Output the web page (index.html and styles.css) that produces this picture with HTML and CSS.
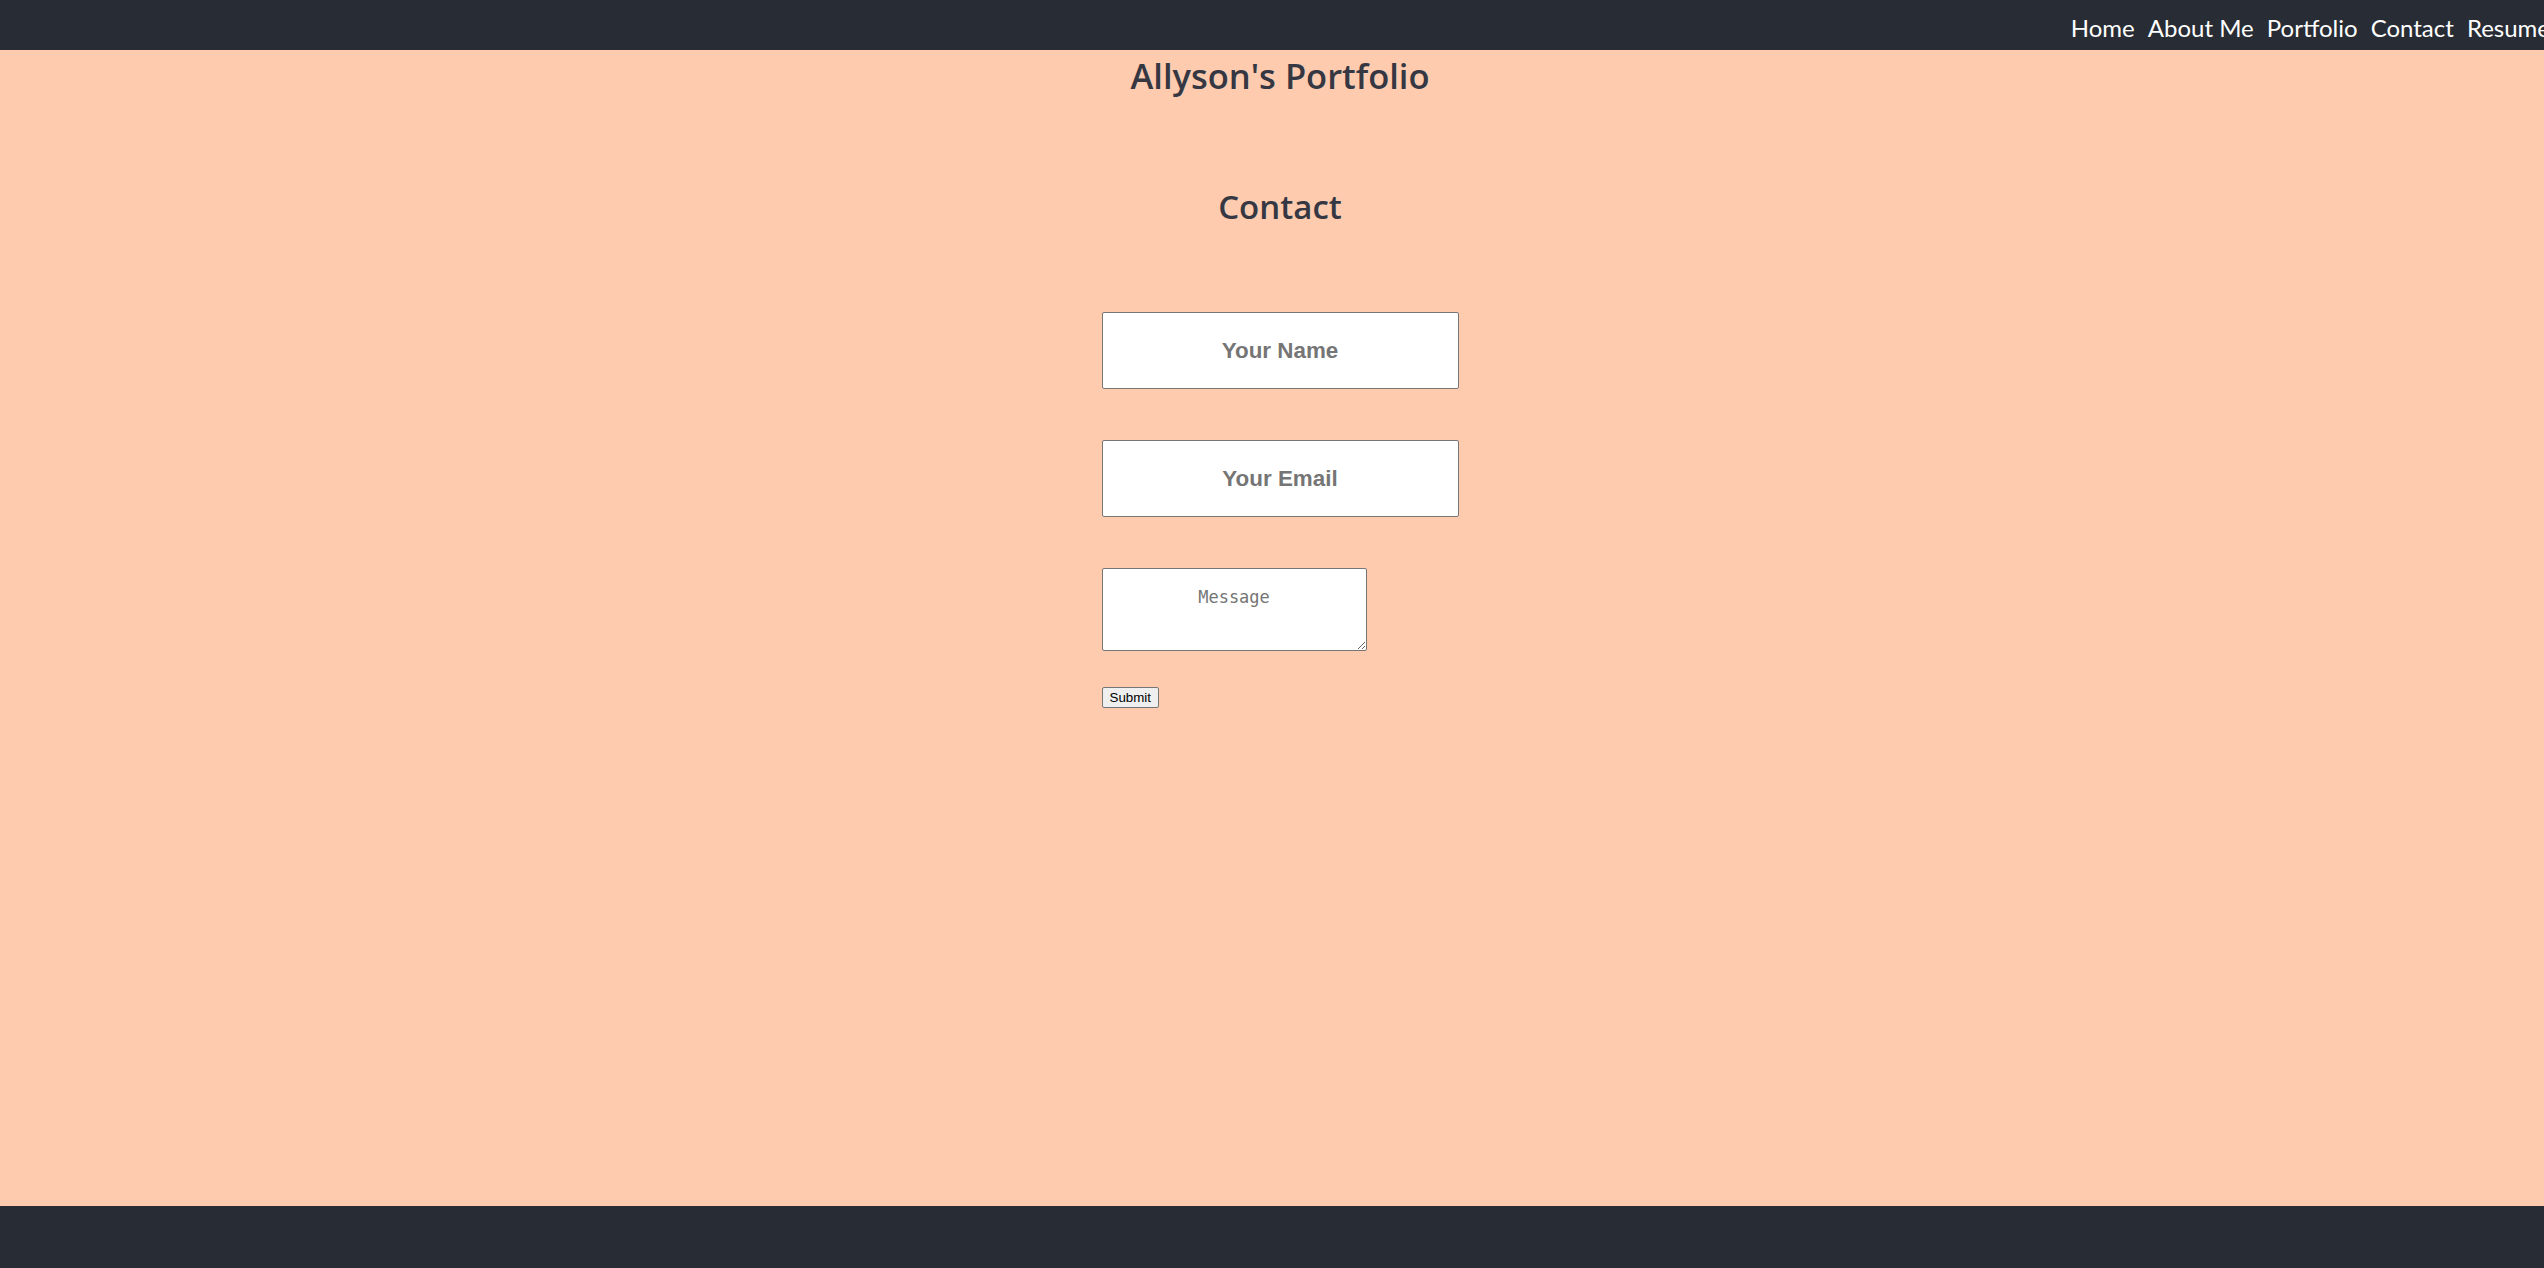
FILE: index.html
```html
<!DOCTYPE html>
<html lang="en">
<head>
<meta charset="utf-8">
<title>Allyson's Portfolio</title>
<link rel="stylesheet" href="styles.css">
</head>
<body>
<header class="topbar">
  <nav class="nav">
    <a class="nav-link" href="#">Home</a>
    <a class="nav-link" href="#">About Me</a>
    <a class="nav-link" href="#">Portfolio</a>
    <a class="nav-link" href="#">Contact</a>
    <a class="nav-link" href="#">Resume</a>
  </nav>
</header>
<main class="content">
  <h1 class="site-title">Allyson's Portfolio</h1>
  <h2 class="section-title">Contact</h2>
  <form class="contact-form">
    <input class="field" type="text" placeholder="Your Name">
    <input class="field" type="email" placeholder="Your Email">
    <textarea class="message" placeholder="Message"></textarea>
    <button class="submit" type="submit">Submit</button>
  </form>
</main>
<footer class="footer"></footer>
</body>
</html>
```
FILE: styles.css
```css
html, body {
  margin: 0;
  padding: 0;
}
body {
  background: #fecbaf;
  min-height: 100vh;
  display: flex;
  flex-direction: column;
  overflow-x: hidden;
  font-family: Lato, "Open Sans", sans-serif;
}
.topbar {
  height: 50px;
  background: #282c34;
  display: flex;
  justify-content: flex-end;
  align-items: center;
}
.nav {
  display: flex;
  gap: 13px;
  margin-right: -6px;
  padding-top: 5px;
}
.nav-link {
  color: #ffffff;
  text-decoration: none;
  font-size: 24px;
  line-height: 30px;
}
.content {
  flex: 1;
  text-align: center;
  padding-left: 16px;
}
.site-title {
  margin: 4px 0 0;
  font-family: "Open Sans", Lato, sans-serif;
  font-size: 34.5px;
  line-height: 44px;
  font-weight: 600;
  color: #353842;
}
.section-title {
  margin: 89px 0 0;
  font-family: "Open Sans", Lato, sans-serif;
  font-size: 33px;
  line-height: 40px;
  font-weight: 600;
  color: #353842;
}
.contact-form {
  width: 357px;
  margin: 85px auto 0;
  display: flex;
  flex-direction: column;
  align-items: flex-start;
}
.field {
  box-sizing: border-box;
  width: 357px;
  height: 77px;
  margin: 0 0 51px;
  border: 1px solid #767676;
  border-radius: 2px;
  background: #fff;
  text-align: center;
  font-family: "Liberation Sans", Arial, sans-serif;
  font-weight: 700;
  font-size: 22.4px;
}
.field::placeholder {
  color: #757575;
}
.message {
  box-sizing: border-box;
  width: 265px;
  height: 83px;
  margin: 0 0 36px;
  padding: 18px 8px;
  border: 1px solid #767676;
  border-radius: 2px;
  background: #fff;
  text-align: center;
  font-family: "DejaVu Sans Mono", "Liberation Mono", monospace;
  font-weight: 400;
  font-size: 17px;
}
.message::placeholder {
  color: #757575;
}
.submit {
  box-sizing: border-box;
  height: 21px;
  font-family: "Liberation Sans", Arial, sans-serif;
  font-size: 13.333px;
  line-height: 15px;
  padding: 1px 7px;
  border: 1px solid #767676;
  border-radius: 2px;
  background: #efefef;
  color: #000;
}
.footer {
  height: 62px;
  background: #282c34;
}
```
